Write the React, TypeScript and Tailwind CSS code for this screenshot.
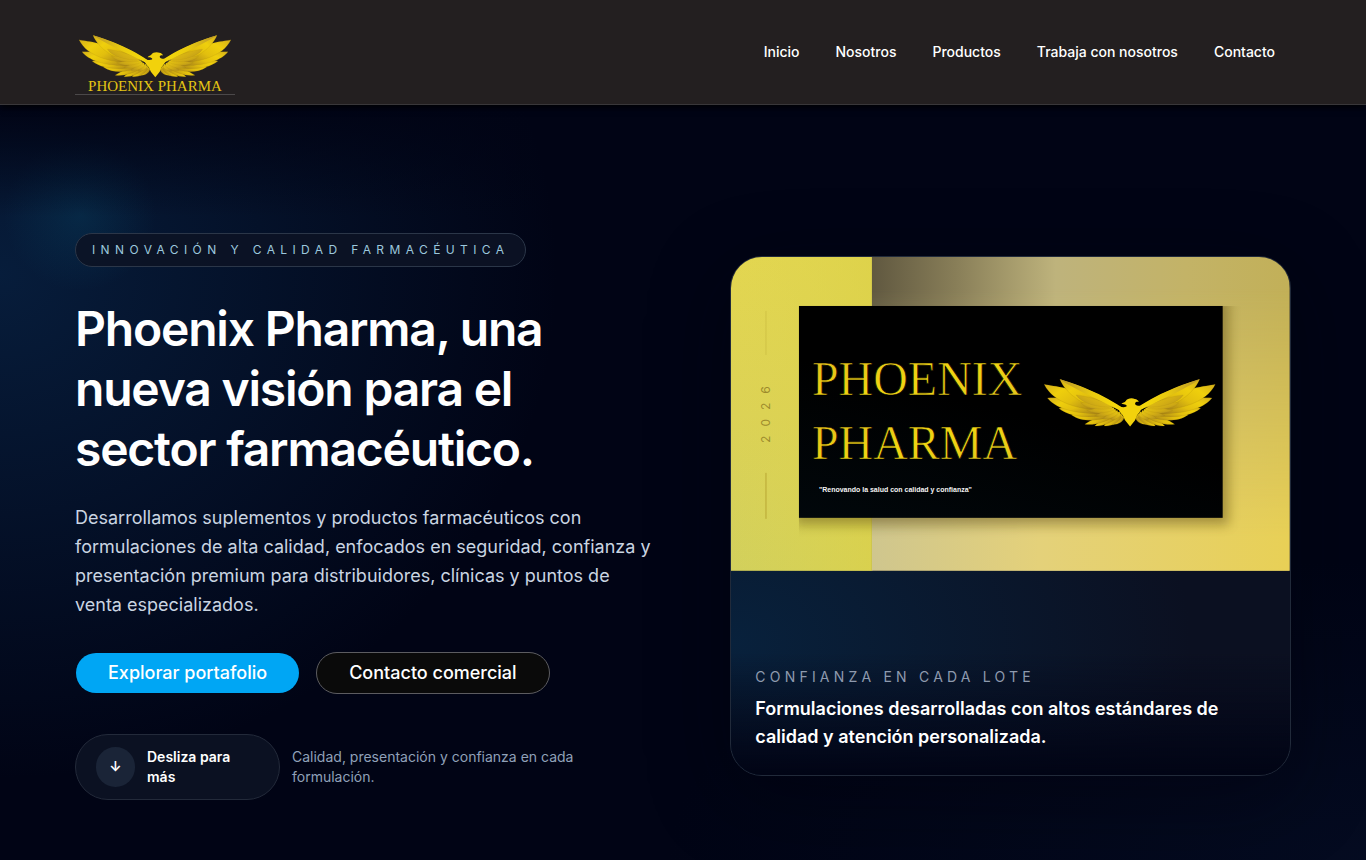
import React from "react";

type TLink = { label: string; href: string };

const links: TLink[] = [
  { label: "Inicio", href: "#inicio" },
  { label: "Nosotros", href: "#nosotros" },
  { label: "Productos", href: "#productos" },
  { label: "Trabaja con nosotros", href: "#trabaja" },
  { label: "Contacto", href: "#contacto" },
];

// outer feathers of the left wing, lowest first so the upper ones overlap
const primaries = [
  "M234 163C240 152 248 140 258 130L268 142C266 154 250 164 234 163Z",
  "M208 167C216 154 234 138 254 126L260 142C248 160 230 169 208 167Z",
  "M180 167C192 154 214 138 248 124L248 142C228 158 206 169 180 167Z",
  "M150 162C168 150 196 134 242 122L238 140C212 154 182 166 150 162Z",
  "M110 134C138 130 176 122 236 118L226 138C196 152 144 158 110 134Z",
  "M72 114C106 110 150 104 230 118L210 134C174 144 108 144 72 114Z",
  "M38 83C76 82 130 82 225 114L200 130C150 132 70 124 38 83Z",
  "M28 42C60 50 110 46 220 106L190 120C136 116 56 100 28 42Z",
  "M75 27C100 36 180 60 250 106L204 116C154 110 96 76 75 27Z",
];

const coverts = [
  "M228 148C232 138 242 130 254 124L258 134C250 144 240 150 228 148Z",
  "M204 146C212 136 230 126 248 120L250 130C238 142 220 148 204 146Z",
  "M180 136C194 128 216 120 242 116L244 124C226 136 202 142 180 136Z",
  "M156 120C176 116 206 110 238 112L238 119C212 130 176 132 156 120Z",
  "M138 98C162 96 196 100 234 109L230 115C196 120 154 116 138 98Z",
  "M124 74C152 76 190 88 232 106L222 111C188 110 140 100 124 74Z",
];

const Wing: React.FC<{ id: string }> = ({ id }) => (
  <>
    {primaries.map((d) => (
      <path key={d} d={d} fill={`url(#${id}-feather)`} stroke="#8f7309" strokeOpacity=".5" />
    ))}
    {coverts.map((d) => (
      <path key={d} d={d} fill={`url(#${id}-covert)`} stroke="#86690a" strokeOpacity=".3" />
    ))}
    <path
      d="M75 27C100 34 190 62 262 112L264 126C222 100 140 70 75 27Z"
      fill={`url(#${id}-edge)`}
    />
  </>
);

const Phoenix: React.FC<{ id: string } & React.SVGProps<SVGSVGElement>> = ({
  id,
  ...props
}) => (
  <svg viewBox="28 26 514 144" aria-hidden="true" {...props}>
    <defs>
      <linearGradient id={`${id}-feather`} x1="0" y1="0" x2="1" y2=".6">
        <stop offset="0" stopColor="#d3ae1c" />
        <stop offset=".3" stopColor="#efcf0c" />
        <stop offset=".6" stopColor="#e2bf0e" />
        <stop offset="1" stopColor="#a88318" />
      </linearGradient>
      <linearGradient id={`${id}-covert`} x1="0" y1=".8" x2="1" y2=".2">
        <stop offset="0" stopColor="#b8951c" />
        <stop offset=".45" stopColor="#d3ae14" />
        <stop offset="1" stopColor="#e6c512" />
      </linearGradient>
      <linearGradient id={`${id}-edge`}>
        <stop offset="0" stopColor="#b9962a" />
        <stop offset=".5" stopColor="#e8c90f" />
        <stop offset="1" stopColor="#f7dc0a" />
      </linearGradient>
    </defs>
    <Wing id={id} />
    <g transform="matrix(-1 0 0 1 570 0)">
      <Wing id={id} />
    </g>
    <path
      d="M260 101C264 96 270 97 273 92C277 84 292 82 300 86C306 87 311 90 312 95C306 93 302 95 301 99C300 106 312 108 324 106C321 118 313 128 307 135L301 150L286 169L271 150L264 135C256 128 250 117 247 106C257 111 268 112 275 109C278 104 271 101 260 101Z"
      fill="#f2d20c"
    />
  </svg>
);

const Header: React.FC = () => (
  <header className="relative z-10 border-b border-[#39373a] bg-[#231f20] shadow-md shadow-black/60">
    <div className="mx-auto flex max-w-7xl items-center justify-between px-8 py-[9px]">
      <a
        href="#inicio"
        className="flex w-40 flex-col items-center border-b border-[#4b4849] pt-[26px] text-center"
      >
        <Phoenix id="nav" className="w-38" />
        <span className="font-['Liberation_Serif',serif] text-[15px] leading-4 text-[#e3c514]">
          PHOENIX PHARMA
        </span>
      </a>
      <nav className="hidden gap-1 md:flex">
        {links.map(({ label, href }) => (
          <a
            key={label}
            href={href}
            className="rounded-full px-4 py-2 text-sm font-medium text-white hover:bg-white/10"
          >
            {label}
          </a>
        ))}
      </nav>
    </div>
  </header>
);

const Artwork: React.FC = () => (
  <svg viewBox="0 0 559 314" className="block w-full" role="img" aria-label="Phoenix Pharma">
    <defs>
      <linearGradient id="art-left" x1="0" y1="0" x2="0" y2="1">
        <stop offset="0" stopColor="#e3d650" />
        <stop offset=".5" stopColor="#dcd255" />
        <stop offset="1" stopColor="#d2d05c" />
      </linearGradient>
      <linearGradient id="art-left-warm" x1="0" y1="0" x2="1" y2="0">
        <stop offset="0" stopColor="#dcd450" stopOpacity="0" />
        <stop offset="1" stopColor="#dcd148" stopOpacity=".7" />
      </linearGradient>
      <linearGradient id="art-top" x1="141" x2="559" gradientUnits="userSpaceOnUse">
        <stop offset="0" stopColor="#605840" />
        <stop offset=".2" stopColor="#887e58" />
        <stop offset=".44" stopColor="#beb37c" />
        <stop offset=".75" stopColor="#c3b367" />
        <stop offset="1" stopColor="#c2b058" />
      </linearGradient>
      <linearGradient id="art-bottom" x1="141" x2="559" gradientUnits="userSpaceOnUse">
        <stop offset="0" stopColor="#cfc68e" />
        <stop offset=".4" stopColor="#e4d17a" />
        <stop offset="1" stopColor="#e8d056" />
      </linearGradient>
      <linearGradient id="art-fade" x1="0" y1="0" x2="0" y2="1">
        <stop offset=".1" stopColor="#fff" stopOpacity="0" />
        <stop offset=".9" stopColor="#fff" />
      </linearGradient>
      <mask id="art-mask">
        <rect x="141" width="418" height="314" fill="url(#art-fade)" />
      </mask>
      <filter id="art-shadow" x="-10%" y="-10%" width="120%" height="120%">
        <feGaussianBlur stdDeviation="6" />
      </filter>
      <clipPath id="art-clip">
        <rect x="68" y="49" width="491" height="265" />
      </clipPath>
      <linearGradient id="art-gold" x1="0" y1="0" x2="1" y2="1">
        <stop offset="0" stopColor="#e0b91c" />
        <stop offset=".5" stopColor="#f0d512" />
        <stop offset="1" stopColor="#e2c31e" />
      </linearGradient>
      <linearGradient id="art-board" x1="0" y1="1" x2=".5" y2="0">
        <stop offset="0" stopColor="#01070b" />
        <stop offset=".6" stopColor="#000" />
      </linearGradient>
    </defs>

    <rect width="142" height="314" fill="url(#art-left)" />
    <rect width="142" height="314" fill="url(#art-left-warm)" />
    <rect x="141" width="418" height="314" fill="url(#art-top)" />
    <rect x="141" width="418" height="314" fill="url(#art-bottom)" mask="url(#art-mask)" />

    <path d="M35 54V98" stroke="#b09c28" strokeOpacity=".3" />
    <path d="M35 216V262" stroke="#b09c28" strokeOpacity=".8" />
    <text
      transform="translate(39 186) rotate(-90)"
      className="font-['Inter',sans-serif] text-[12px]"
      letterSpacing="9"
      fill="#9c8a2c"
    >
      2026
    </text>

    <g clipPath="url(#art-clip)">
      <rect x="64" y="42" width="434" height="226" fill="#5a4a10" opacity=".45" filter="url(#art-shadow)" />
    </g>
    <rect x="68" y="49" width="424" height="212" fill="url(#art-board)" />
    {/* the black outline thins the strokes of the lettering */}
    <g
      className="font-['Liberation_Serif',serif] text-[48px]"
      fill="url(#art-gold)"
      stroke="#000"
      strokeWidth=".7"
    >
      <text x="81" y="138">PHOENIX</text>
      <text x="81" y="202">PHARMA</text>
    </g>
    <text
      x="88"
      y="235"
      className="font-['Liberation_Sans',sans-serif] text-[7px] font-bold"
      fill="#f4f4f4"
    >
      &quot;Renovando la salud con calidad y confianza&quot;
    </text>
    <Phoenix id="art" x="313" y="122" width="172" height="48" />
  </svg>
);

const Hero: React.FC = () => (
  <section
    id="inicio"
    className="relative bg-[#010415] bg-[radial-gradient(circle_at_80px_110px,rgba(8,66,98,0.38),transparent_76px),radial-gradient(ellipse_620px_560px_at_0px_170px,rgba(14,58,104,0.46),transparent_90%),radial-gradient(ellipse_700px_300px_at_100%_100%,rgba(10,24,54,0.35),transparent)]"
  >
    <div className="absolute inset-x-0 top-0 h-28 bg-linear-to-b from-[#010415] to-transparent" />
    <div className="relative mx-auto grid max-w-7xl items-center gap-12 px-8 pt-32 pb-15 lg:grid-cols-[13fr_12fr]">
      <div className="max-w-xl">
        <span className="inline-flex rounded-full border border-[#2b3648] bg-[#0c1325]/90 px-4 py-2 text-xs tracking-[0.45em] text-[#9cc8dd] uppercase">
          Innovación y calidad farmacéutica
        </span>
        <h1 className="mt-8 text-5xl leading-[60px] font-semibold tracking-tight text-white">
          Phoenix Pharma, una nueva visión para el sector farmacéutico.
        </h1>
        <p className="mt-6 text-lg leading-relaxed text-slate-300">
          Desarrollamos suplementos y productos farmacéuticos con formulaciones
          de alta calidad, enfocados en seguridad, confianza y presentación
          premium para distribuidores, clínicas y puntos de venta
          especializados.
        </p>
        <div className="mt-8 flex flex-wrap gap-4">
          <button
            type="button"
            className="rounded-full border border-transparent bg-[#00a6f4] bg-clip-padding px-8 py-1.5 text-lg font-medium text-white"
          >
            Explorar portafolio
          </button>
          <button
            type="button"
            className="rounded-full border border-[#5c5c60] bg-[#0a0a0a] px-8 py-1.5 text-lg font-medium text-white"
          >
            Contacto comercial
          </button>
        </div>
        <div className="mt-10 flex items-center gap-3 text-sm">
          <a
            href="#productos"
            className="flex w-[205px] shrink-0 items-center gap-3 rounded-full border border-[#232a3a] bg-[#0b1122] px-5 py-3 font-semibold text-white"
          >
            <span className="flex h-10 w-[39px] shrink-0 items-center justify-center rounded-full bg-[#1a2437]">
              ↓
            </span>
            Desliza para más
          </a>
          <p className="max-w-xs text-slate-400">
            Calidad, presentación y confianza en cada formulación.
          </p>
        </div>
      </div>

      <article className="flex min-h-[520px] flex-col overflow-hidden rounded-4xl border border-[#212a3a] bg-[#0b1021] shadow-[0_20px_80px_rgba(0,0,10,0.45)]">
        <Artwork />
        <div className="flex grow flex-col justify-end bg-[linear-gradient(to_top,#010415,transparent_60%),radial-gradient(ellipse_460px_320px_at_0%_35%,#08213c,transparent)] p-6">
          <p className="text-sm tracking-[0.3em] text-[#8e9aae] uppercase">
            Confianza en cada lote
          </p>
          <h2 className="mt-2 text-lg leading-7 font-semibold text-white">
            Formulaciones desarrolladas con altos estándares de calidad y
            atención personalizada.
          </h2>
        </div>
      </article>
    </div>
  </section>
);

export default function App() {
  return (
    <main className="min-h-screen bg-[#010415] font-['Inter',sans-serif]">
      <Header />
      <Hero />
    </main>
  );
}
